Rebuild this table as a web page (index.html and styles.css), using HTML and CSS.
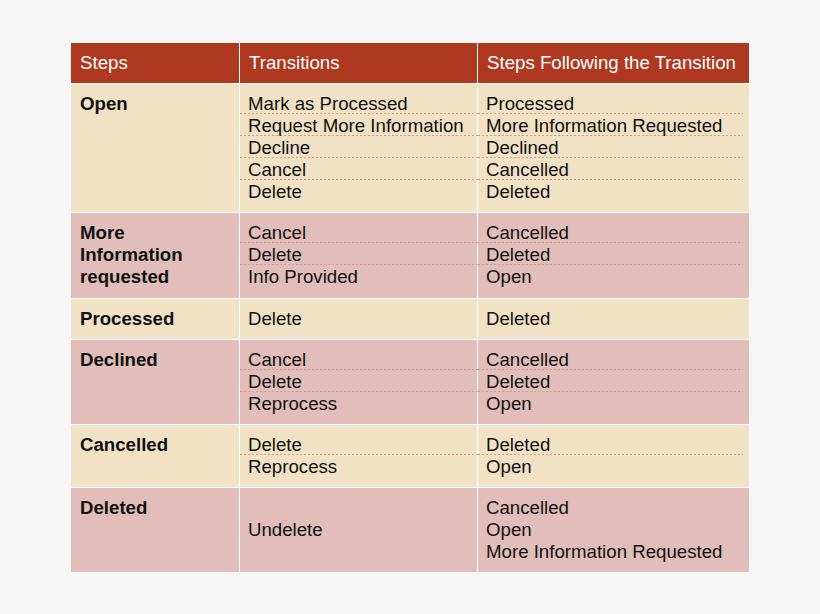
FILE: index.html
```html
<!DOCTYPE html>
<html>
<head>
<meta charset="utf-8">
<link rel="stylesheet" href="styles.css">
</head>
<body>
<div class="table">
  <div class="cell head">Steps</div>
  <div class="cell head">Transitions</div>
  <div class="cell head">Steps Following the Transition</div>

  <div class="cell beige step">Open</div>
  <div class="cell beige c2">
    <div class="item">Mark as Processed</div>
    <div class="item">Request More Information</div>
    <div class="item">Decline</div>
    <div class="item">Cancel</div>
    <div class="item last">Delete</div>
  </div>
  <div class="cell beige c3">
    <div class="item">Processed</div>
    <div class="item">More Information Requested</div>
    <div class="item">Declined</div>
    <div class="item">Cancelled</div>
    <div class="item last">Deleted</div>
  </div>

  <div class="cell pink step tall">More<br>Information<br>requested</div>
  <div class="cell pink c2 tall">
    <div class="item">Cancel</div>
    <div class="item">Delete</div>
    <div class="item last">Info Provided</div>
  </div>
  <div class="cell pink c3 tall">
    <div class="item">Cancelled</div>
    <div class="item">Deleted</div>
    <div class="item last">Open</div>
  </div>

  <div class="cell beige step">Processed</div>
  <div class="cell beige c2"><div class="item last">Delete</div></div>
  <div class="cell beige c3"><div class="item last">Deleted</div></div>

  <div class="cell pink step">Declined</div>
  <div class="cell pink c2">
    <div class="item">Cancel</div>
    <div class="item">Delete</div>
    <div class="item last">Reprocess</div>
  </div>
  <div class="cell pink c3">
    <div class="item">Cancelled</div>
    <div class="item">Deleted</div>
    <div class="item last">Open</div>
  </div>

  <div class="cell beige step">Cancelled</div>
  <div class="cell beige c2">
    <div class="item">Delete</div>
    <div class="item last">Reprocess</div>
  </div>
  <div class="cell beige c3">
    <div class="item">Deleted</div>
    <div class="item last">Open</div>
  </div>

  <div class="cell pink step">Deleted</div>
  <div class="cell pink c2 center"><div class="item last">Undelete</div></div>
  <div class="cell pink c3">
    <div class="item last">Cancelled</div>
    <div class="item last">Open</div>
    <div class="item last">More Information Requested</div>
  </div>
</div>
</body>
</html>
```
FILE: styles.css
```css
html, body {
  margin: 0;
  padding: 0;
  background: #f6f6f6;
}
body {
  padding: 43px 0 0 71px;
  font-family: "Liberation Sans", Arial, sans-serif;
  font-size: 18.67px;
  line-height: 22px;
  color: #111;
}
.table {
  display: grid;
  grid-template-columns: 168px 237px 271px;
  gap: 1px;
  background: #ffffff;
  width: max-content;
}
.cell {
  padding: 9px 6px 9px 9px;
}
.tall {
  padding-bottom: 10px;
}
.head {
  background: #ae3820;
  color: #fff;
}
.beige { background: #f2e2c5; }
.pink { background: #e1beb9; }
.step { font-weight: bold; }
.c2, .c3 { padding-left: 8px; }
.center {
  display: flex;
  flex-direction: column;
  justify-content: center;
}
.item {
  height: 21px;
  border-bottom: 1px solid transparent;
  background: repeating-linear-gradient(to right, #d39a86 0 2px, transparent 2px 4px) left bottom / 100% 1px no-repeat;
  white-space: nowrap;
}
.item.last {
  background: none;
}
.c2 .item {
  margin: 0 -7px 0 -8px;
  padding: 0 7px 0 8px;
  position: relative;
  z-index: 1;
}
.c3 .item {
  margin-left: -8px;
  padding-left: 8px;
}
```
